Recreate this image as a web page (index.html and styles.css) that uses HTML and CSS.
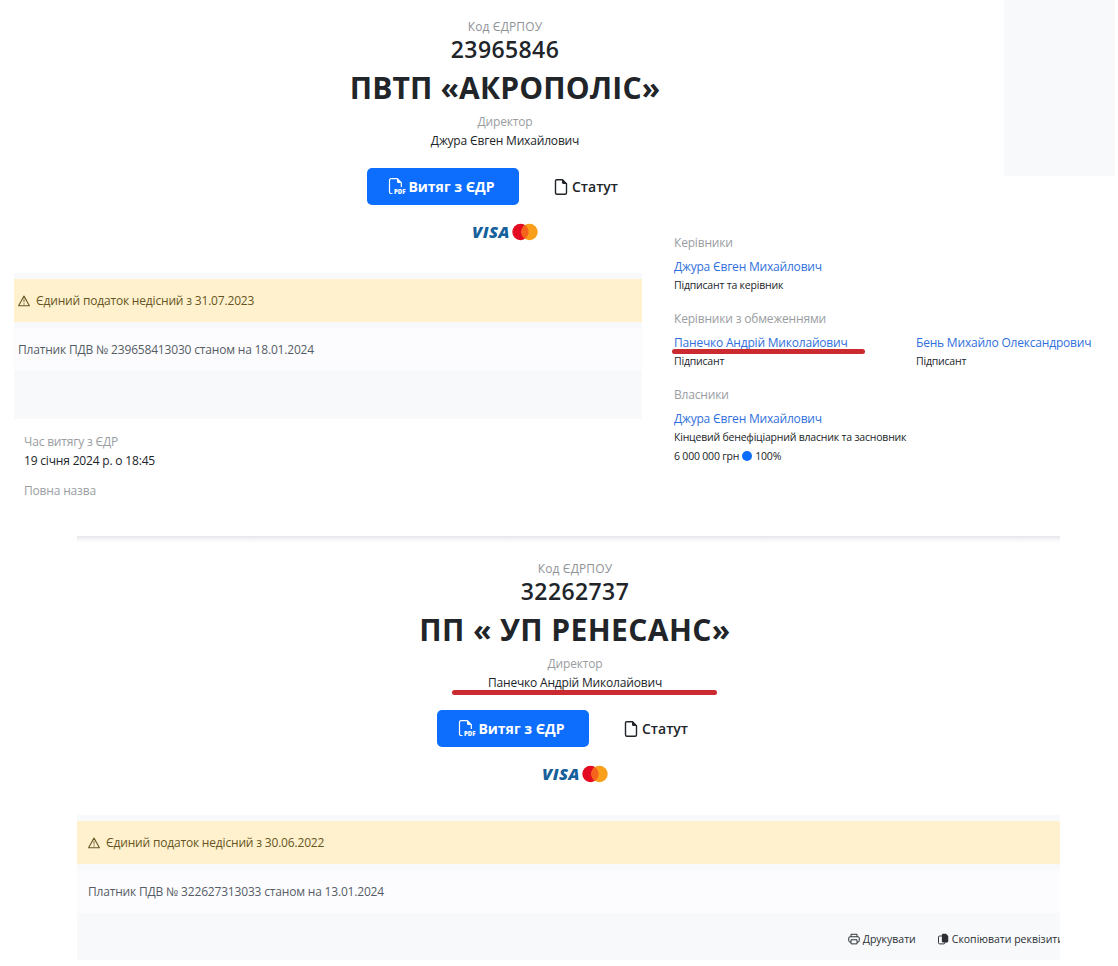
FILE: index.html
```html
<!DOCTYPE html>
<html lang="uk">
<head>
    <meta charset="utf-8">
    <title>ПВТП «АКРОПОЛІС»</title>
    <link rel="stylesheet" href="styles.css">
</head>
<body>
<svg width="0" height="0" class="sprite">
    <symbol id="pdf" viewBox="0 0 16 17">
        <path d="M4.500 15.500H3A1.500 1.500 0 0 1 1.500 14V2.200A1.500 1.500 0 0 1 3 .7h6.300l4 4V9" fill="none" stroke="currentColor" stroke-width="1.200"/>
        <path d="M9 .5v3A1.500 1.500 0 0 0 10.500 5h3.300z"/>
    </symbol>
    <symbol id="file" viewBox="0 0 16 16">
        <path d="M3.500.7h6l4 4v9a1.500 1.500 0 0 1-1.500 1.500H4a1.500 1.500 0 0 1-1.500-1.500v-12A1 1 0 0 1 3.500.7z" fill="none" stroke="currentColor" stroke-width="1.400"/>
        <path d="M9 .5v3A1.500 1.500 0 0 0 10.500 5H14z"/>
    </symbol>
    <symbol id="warning" viewBox="0 0 16 16">
        <path d="M8 1.500 15.200 14.300H.8z" fill="none" stroke="currentColor" stroke-width="1.400" stroke-linejoin="round"/>
        <path d="M7.300 5.800h1.400l-.3 4.400h-.8zM7.200 11.200h1.600v1.500H7.200z"/>
    </symbol>
    <symbol id="printer" viewBox="0 0 16 16">
        <path d="M4 5V1.700h8V5M4 12H2.500A1.500 1.500 0 0 1 1 10.500v-4A1.500 1.500 0 0 1 2.500 5h11A1.500 1.500 0 0 1 15 6.500v4a1.500 1.500 0 0 1-1.500 1.500H12M4 9h8v5.500H4z" fill="none" stroke="currentColor" stroke-width="1.300"/>
    </symbol>
    <symbol id="copy" viewBox="0 0 16 16">
        <path d="M8 1h4L15 4v7a1.500 1.500 0 0 1-1.500 1.500H8A1.500 1.500 0 0 1 6.500 11V2.500A1.500 1.500 0 0 1 8 1z"/>
        <path d="M6.500 4H3.500A1.500 1.500 0 0 0 2 5.500V13a1.500 1.500 0 0 0 1.500 1.500H9A1.500 1.500 0 0 0 10.500 13v-1" fill="none" stroke="currentColor" stroke-width="1.300"/>
    </symbol>
</svg>

<div class="company company-first">
    <div class="main">
        <div class="hero">
            <div class="label label-code">Код ЄДРПОУ</div>
            <div class="code">23965846</div>
            <h1>ПВТП «АКРОПОЛІС»</h1>
            <div class="label">Директор</div>
            <div class="director">Джура Євген Михайлович</div>
            <div class="buttons">
                <button class="btn btn-primary" type="button"><span class="pdf"><svg><use href="#pdf"/></svg><small>PDF</small></span>Витяг з ЄДР</button>
                <button class="btn" type="button"><svg class="file"><use href="#file"/></svg>Статут</button>
            </div>
            <div class="payments">
                <span class="visa">VISA</span>
                <svg class="mastercard" viewBox="0 0 26 18"><circle cx="8.500" cy="9" r="8.200" fill="#e30b22"/><circle cx="17.500" cy="9" r="8.200" fill="#f99f1c"/><path d="M13 2.200a8.200 8.200 0 0 1 0 13.600a8.200 8.200 0 0 1 0-13.600z" fill="#f5641a"/></svg>
            </div>
        </div>
        <div class="statuses">
            <div class="status status-warning"><svg><use href="#warning"/></svg><span>Єдиний податок недісний з 31.07.2023</span></div>
            <div class="status"><span>Платник ПДВ № 239658413030 станом на 18.01.2024</span></div>
            <div class="tools"></div>
        </div>
        <div class="details">
            <div class="label">Час витягу з ЄДР</div>
            <div class="value">19 січня 2024 р. о 18:45</div>
            <div class="label">Повна назва</div>
        </div>
    </div>
    <div class="side">
        <div class="banner"></div>
        <div class="people">
            <div class="label">Керівники</div>
            <div class="person">
                <a href="#">Джура Євген Михайлович</a>
                <p>Підписант та керівник</p>
            </div>
            <div class="label">Керівники з обмеженнями</div>
            <div class="row">
                <div class="person marked">
                    <a href="#">Панечко Андрій Миколайович</a>
                    <p>Підписант</p>
                </div>
                <div class="person">
                    <a href="#">Бень Михайло Олександрович</a>
                    <p>Підписант</p>
                </div>
            </div>
            <div class="label">Власники</div>
            <div class="person">
                <a href="#">Джура Євген Михайлович</a>
                <p>Кінцевий бенефіціарний власник та засновник</p>
                <p class="share">6 000 000 грн <i class="dot"></i> 100%</p>
            </div>
        </div>
    </div>
</div>

<div class="company company-second">
    <div class="hero">
        <div class="label label-code">Код ЄДРПОУ</div>
        <div class="code">32262737</div>
        <h1>ПП « УП РЕНЕСАНС»</h1>
        <div class="label">Директор</div>
        <div class="director marked">Панечко Андрій Миколайович</div>
        <div class="buttons">
            <button class="btn btn-primary" type="button"><span class="pdf"><svg><use href="#pdf"/></svg><small>PDF</small></span>Витяг з ЄДР</button>
            <button class="btn" type="button"><svg class="file"><use href="#file"/></svg>Статут</button>
        </div>
        <div class="payments">
            <span class="visa">VISA</span>
            <svg class="mastercard" viewBox="0 0 26 18"><circle cx="8.500" cy="9" r="8.200" fill="#e30b22"/><circle cx="17.500" cy="9" r="8.200" fill="#f99f1c"/><path d="M13 2.200a8.200 8.200 0 0 1 0 13.600a8.200 8.200 0 0 1 0-13.600z" fill="#f5641a"/></svg>
        </div>
    </div>
    <div class="statuses">
        <div class="status status-warning"><svg><use href="#warning"/></svg><span>Єдиний податок недісний з 30.06.2022</span></div>
        <div class="status"><span>Платник ПДВ № 322627313033 станом на 13.01.2024</span></div>
        <div class="tools">
            <a href="#"><svg><use href="#printer"/></svg>Друкувати</a>
            <a href="#"><svg><use href="#copy"/></svg>Скопіювати реквізити</a>
        </div>
    </div>
</div>
</body>
</html>
```
FILE: styles.css
```css
* {
    box-sizing: border-box;
}

body {
    margin: 0;
    background-color: #fff;
    color: #212529;
    font-family: "Open Sans", "Noto Sans", sans-serif;
    font-size: 12px;
    letter-spacing: -0.18px;
    overflow: hidden;
}

.sprite {
    display: block;
}

svg {
    fill: currentColor;
    flex: none;
}

h1, p {
    margin: 0;
}

a {
    color: #2f6fdc;
    text-decoration: none;
}

.company-first {
    display: flex;
    height: 536px;
}

.main {
    width: 674px;
    flex: none;
}

/* header with code, name and buttons */
.hero {
    display: flex;
    flex-direction: column;
    align-items: center;
    height: 273px;
    padding-top: 18px;
    white-space: nowrap;
}

.company-first .hero {
    padding-left: 336px;
}

.label {
    color: #999da1;
    line-height: 18px;
}

.label-code {
    color: #8f9397;
    letter-spacing: 0.15px;
}

.code {
    margin-top: -1px;
    font-size: 23px;
    font-weight: 600;
    letter-spacing: 0.4px;
    line-height: 28px;
}

h1 {
    margin-top: 1px;
    font-size: 30px;
    font-weight: 700;
    letter-spacing: 0.15px;
    line-height: 48px;
}

.company-second h1 {
    letter-spacing: 0.4px;
}

.director {
    margin-top: 1px;
    line-height: 18px;
}

.hero h1 + .label {
    margin-top: 1px;
}

.buttons {
    display: flex;
    gap: 12px;
    margin-top: 18px;
}

.btn {
    display: flex;
    align-items: center;
    justify-content: center;
    width: 112px;
    height: 37px;
    padding: 0 3px 0 0;
    border: none;
    border-radius: 5px;
    background: none;
    color: #212529;
    font-family: inherit;
    font-size: 14px;
    font-weight: 600;
    white-space: nowrap;
}

.btn-primary {
    width: 152px;
    background-color: #0d6efd;
    color: #fff;
    font-weight: 700;
}

.file {
    width: 16px;
    height: 16px;
    margin-right: 3px;
}

.pdf {
    position: relative;
    width: 17px;
    height: 17px;
    margin-right: 3px;
}

.pdf svg {
    display: block;
    width: 16px;
    height: 17px;
}

.pdf small {
    position: absolute;
    right: 0;
    bottom: 0;
    font-size: 6px;
    font-weight: 800;
    letter-spacing: 0;
    line-height: 6px;
}

.payments {
    display: flex;
    align-items: center;
    gap: 2px;
    height: 20px;
    margin-top: 17px;
}

.visa {
    color: #16609c;
    font-size: 16.5px;
    font-style: italic;
    font-weight: 800;
    letter-spacing: 0.4px;
    line-height: 20px;
}

.mastercard {
    width: 26px;
    height: 18px;
}

/* tax statuses */
.statuses {
    display: flex;
    flex-direction: column;
    gap: 6px;
    padding-top: 6px;
    background-color: #f7f9fb;
}

.company-first .statuses {
    width: 628px;
    margin-left: 14px;
}

.status {
    display: flex;
    align-items: center;
    gap: 6px;
    height: 43px;
    padding-left: 4px;
    background-color: #fcfcfe;
    color: #565c66;
}

.company-second .status {
    padding-left: 11px;
}

.status svg {
    width: 12px;
    height: 12px;
}

.status-warning {
    background-color: #fff1cd;
    color: #665523;
}

.tools {
    display: flex;
    justify-content: flex-end;
    gap: 21px;
    height: 42px;
}

.tools a {
    display: flex;
    align-items: center;
    gap: 3px;
    color: #2b2f33;
    font-size: 10.5px;
    letter-spacing: 0;
    white-space: nowrap;
}

.tools svg {
    width: 12px;
    height: 12px;
}

.details {
    padding: 14px 0 0 24px;
}

.details .value {
    margin-bottom: 12px;
    line-height: 19px;
}

/* managers and owners */
.side {
    flex: 1;
}

.banner {
    width: 111px;
    height: 176px;
    margin-left: 330px;
    background-color: #f7f9fb;
}

.people {
    padding-top: 58px;
    white-space: nowrap;
}

.person {
    margin: 6px 0 16px;
    line-height: 18px;
}

.person a {
    display: block;
    letter-spacing: -0.2px;
}

.person p {
    font-size: 10.5px;
    letter-spacing: -0.2px;
}

.person .share {
    display: flex;
    align-items: center;
    gap: 3px;
    margin-top: 1px;
}

.dot {
    width: 10px;
    height: 10px;
    border-radius: 50%;
    background-color: #0d6efd;
}

.row {
    display: grid;
    grid-template-columns: 242px 1fr;
}

.marked {
    position: relative;
}

.marked::after {
    content: "";
    position: absolute;
    top: 15px;
    left: -2px;
    width: 193px;
    height: 5px;
    border-radius: 3px;
    background-color: #cb2a30;
}

.director.marked::after {
    top: 16px;
    left: -36px;
    width: 265px;
}

.company-second {
    width: 983px;
    margin-left: 77px;
    padding-top: 6px;
    background: linear-gradient(#e4e6ec, #f4f4f7 3px, #fff 7px);
}

.company-second .hero {
    padding-left: 13px;
}

.company-second .statuses {
    overflow: hidden;
}

.company-second .tools {
    height: 41px;
    padding-bottom: 1px;
    margin-right: -4px;
}
```
